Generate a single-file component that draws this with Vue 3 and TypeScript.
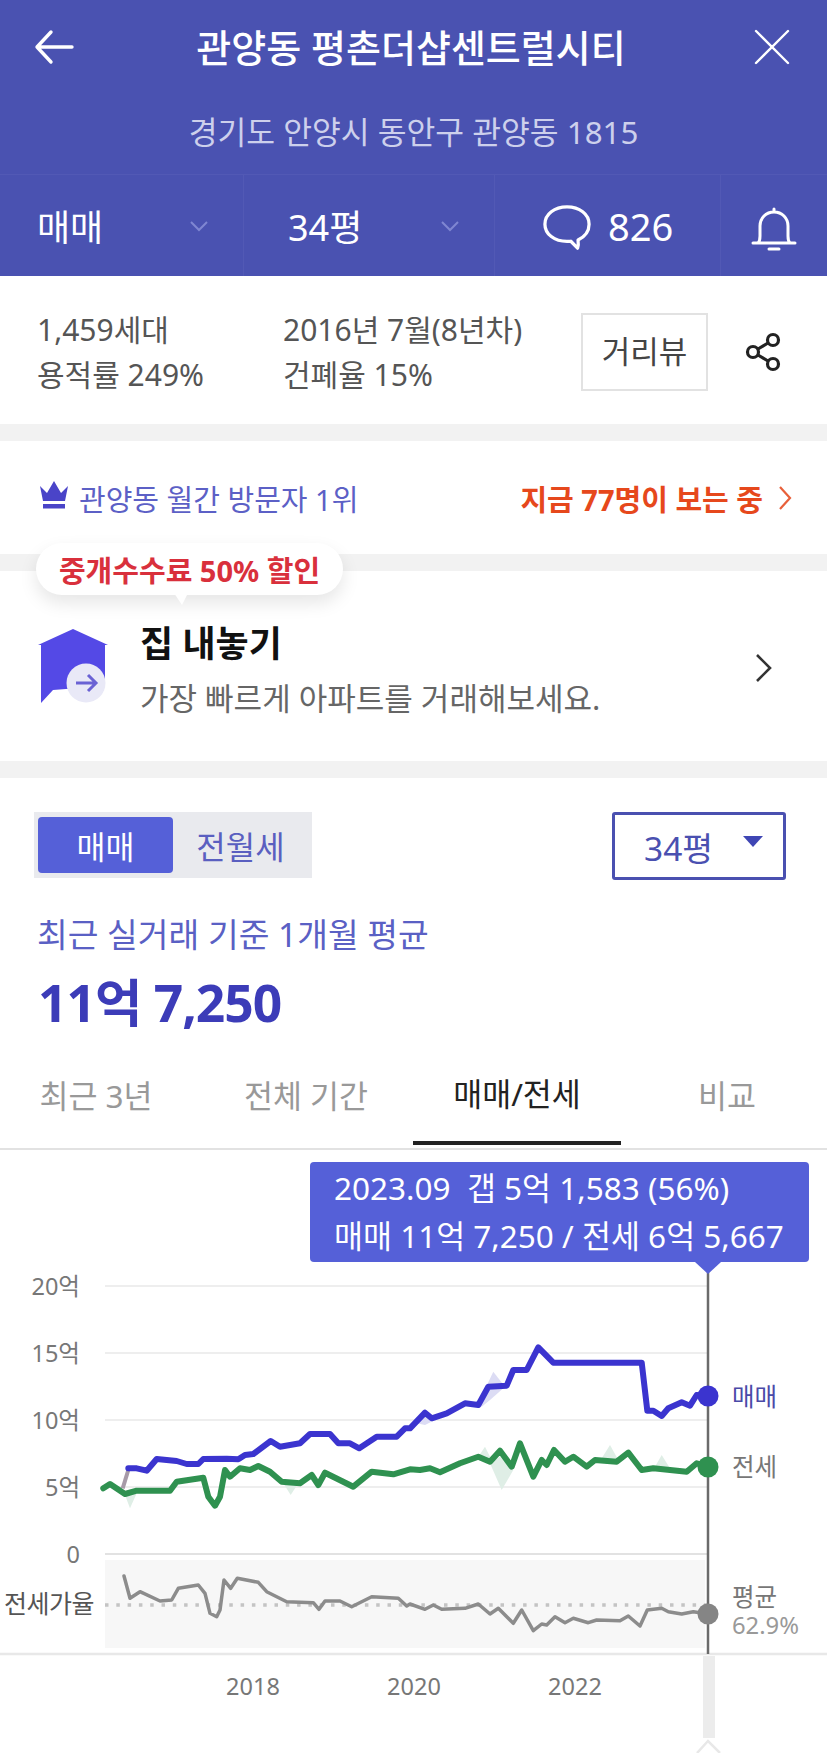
<script setup lang="ts">
type Pt = [number, number]
const left = (pts: Pt[], y0: number): Pt[] => pts.map(([x, y]) => [x / 3, y0 + y / 3])
const right = (pts: Pt[], y0: number): Pt[] => pts.map(([x, y]) => [410 + x / 3, y0 + y / 3])
const str = (pts: Pt[]) => pts.map(([x, y]) => `${x.toFixed(1)},${y.toFixed(1)}`).join(' ')

const blue = str([
  ...left([[385,685],[410,685],[440,692],[470,657],[530,663],[560,672],[595,672],[610,657],[680,656],[715,658],[735,645],[760,642],[812,603],[840,620],[900,610],[930,582],[990,582],[1015,610],[1050,610],[1078,625],[1130,590],[1190,590],[1215,565]], 1240),
  ...right([[0,565],[45,518],[65,535],[110,520],[165,490],[205,495],[235,440],[290,437],[310,390],[350,390],[385,322],[430,368],[695,368],[712,512],[730,512],[755,528],[775,505],[815,487],[840,497],[860,465],[895,468]], 1240)
])
const green = str([
  ...left([[310,745],[330,732],[375,762],[410,752],[510,752],[530,725],[610,713],[625,770],[645,797],[660,770],[675,690],[690,710],[720,685],[750,690],[775,678],[810,695],[845,725],[900,730],[935,705],[955,735],[975,698],[1060,740],[1115,695],[1180,703],[1230,688]], 1240),
  ...right([[0,688],[30,690],[60,685],[90,697],[150,670],[205,650],[240,665],[270,632],[305,680],[330,610],[370,710],[395,660],[410,675],[432,630],[465,665],[490,650],[530,680],[555,660],[620,665],[655,638],[695,690],[730,685],[830,695],[860,670],[895,680]], 1240)
])
const ratio = str([
  ...left([[372,228],[390,295],[420,275],[480,303],[515,300],[535,265],[595,255],[615,280],[630,340],[650,350],[660,330],[672,240],[692,265],[712,235],[775,247],[800,275],[860,305],[940,308],[957,328],[975,303],[1020,303],[1055,320],[1115,290],[1195,295],[1220,318]], 1500),
  ...right([[0,312],[45,328],[70,315],[95,328],[165,325],[205,312],[240,342],[265,325],[310,370],[335,330],[370,392],[395,372],[410,375],[435,350],[465,368],[490,355],[535,368],[560,360],[630,362],[655,348],[690,378],[712,330],[755,325],[775,335],[815,342],[850,335],[895,342]], 1500)
])
const start = str(left([[368,745],[385,690]], 1240))

const hazeBlue = [
  str(right([[205,490],[250,395],[285,440],[240,480],[215,500]], 1240)),
  str(right([[20,550],[50,520],[75,540],[45,555]], 1240))
]
const hazeGreen = [
  str(right([[240,670],[275,750],[310,690],[270,650]], 1240)),
  str(right([[205,650],[225,620],[245,660]], 1240)),
  str(right([[575,655],[600,615],[625,660]], 1240)),
  str(right([[735,680],[755,645],[780,685]], 1240)),
  str(left([[375,765],[390,805],[410,760]], 1240)),
  str(left([[850,730],[872,765],[895,730]], 1240))
]

const grid = [1286, 1353, 1420, 1487]
const yLabels = [
  { t: '20억', y: 1286 },
  { t: '15억', y: 1353 },
  { t: '10억', y: 1420 },
  { t: '5억', y: 1487 },
  { t: '0', y: 1554 }
]
const years = [
  { t: '2018', x: 253 },
  { t: '2020', x: 414 },
  { t: '2022', x: 575 }
]
const tabs = ['최근 3년', '전체 기간', '매매/전세', '비교']
</script>

<template>
  <div class="page">
    <header class="top">
      <div class="title-row">
        <svg class="back" viewBox="0 0 40 36" width="40" height="36">
          <path d="M38 18H3M17 3 3 18l14 15" fill="none" stroke="#fff" stroke-width="3.4" stroke-linecap="round" stroke-linejoin="round" />
        </svg>
        <h1 class="title">관양동 평촌더샵센트럴시티</h1>
        <svg class="close" viewBox="0 0 36 36" width="36" height="36">
          <path d="M2 2 34 34M34 2 2 34" fill="none" stroke="#fff" stroke-width="2.4" stroke-linecap="round" />
        </svg>
      </div>
      <div class="address">경기도 안양시 동안구 관양동 1815</div>
      <div class="bar">
        <div class="cell c1">
          <span>매매</span>
          <svg viewBox="0 0 20 12" width="20" height="12"><path d="M2 2l8 8 8-8" fill="none" stroke="#7f86d2" stroke-width="2" /></svg>
        </div>
        <div class="cell c2">
          <span>34평</span>
          <svg viewBox="0 0 20 12" width="20" height="12"><path d="M2 2l8 8 8-8" fill="none" stroke="#7f86d2" stroke-width="2" /></svg>
        </div>
        <div class="cell c3">
          <svg class="bubble" viewBox="0 0 52 50" width="50" height="48">
            <path d="M37 46C38 43 38 41 37.500 37.500C44.500 34 49 28 49 21C49 10.500 39 3 26 3S3 10.500 3 21S13 39 26 39C28 39 29 39 30 38.800Z" fill="none" stroke="#fff" stroke-width="3.400" stroke-linejoin="round" />
          </svg>
          <span class="count">826</span>
        </div>
        <div class="cell c4">
          <svg class="bell" viewBox="0 0 46 46" width="46" height="46">
            <path d="M2 37H44M7 37C9 35 9 33 9 30V20C9 12 15 6 23 6S37 12 37 20V30C37 33 37 35 39 37M23 3V6M18 43H28" fill="none" stroke="#fff" stroke-width="3" stroke-linecap="round" />
          </svg>
        </div>
      </div>
    </header>

    <section class="info">
      <div class="col first">
        <div>1,459세대</div>
        <div>용적률 249%</div>
      </div>
      <div class="col second">
        <div>2016년 7월(8년차)</div>
        <div>건폐율 15%</div>
      </div>
      <button class="street">거리뷰</button>
      <svg class="share" viewBox="0 0 38 40" width="38" height="40">
        <g fill="none" stroke="#222" stroke-width="3.200">
          <circle cx="28" cy="8" r="5.500" />
          <circle cx="8" cy="20" r="5.500" />
          <circle cx="28" cy="32" r="5.500" />
          <path d="M13 17 23 11M13 23 23 29" />
        </g>
      </svg>
    </section>

    <div class="gap"></div>

    <section class="rank">
      <div class="rank-left">
        <svg class="crown" viewBox="0 0 30 30" width="30" height="30">
          <path d="M1 6 8 13 15 1 22 13 29 6 26 21H4Z" fill="#4a44c8" />
          <rect x="4" y="24" width="22" height="4.500" fill="#4a44c8" />
        </svg>
        <span>관양동 월간 방문자 1위</span>
      </div>
      <div class="rank-right">
        <span>지금 77명이 보는 중</span>
        <svg viewBox="0 0 14 26" width="14" height="26"><path d="M2 2 12 13 2 24" fill="none" stroke="#e8603a" stroke-width="2.200" /></svg>
      </div>
    </section>

    <div class="gap"></div>

    <section class="sell">
      <div class="promo">중개수수료 50% 할인</div>
      <svg class="house" viewBox="0 0 72 78" width="72" height="78">
        <path d="M36 1 71 17H68V58L16 62 4 75V17H1Z" fill="#5449e6" />
        <circle cx="49" cy="55" r="19.500" fill="#e9e9f7" />
        <path d="M39 55H58M51 47l8 8-8 8" fill="none" stroke="#6a62d4" stroke-width="3" />
      </svg>
      <div class="sell-text">
        <div class="sell-title">집 내놓기</div>
        <div class="sell-sub">가장 빠르게 아파트를 거래해보세요.</div>
      </div>
      <svg class="more" viewBox="0 0 18 30" width="18" height="30"><path d="M2 2 15 15 2 28" fill="none" stroke="#333" stroke-width="2.600" /></svg>
    </section>

    <div class="gap"></div>

    <section class="price">
      <div class="controls">
        <div class="segment">
          <span class="seg on">매매</span>
          <span class="seg">전월세</span>
        </div>
        <div class="select">
          <span>34평</span>
          <i class="tri"></i>
        </div>
      </div>
      <div class="basis">최근 실거래 기준 1개월 평균</div>
      <div class="amount">11억 7,250</div>
      <nav class="tabs">
        <span v-for="(t, i) in tabs" :key="t" class="tab" :class="['t' + i, { active: i === 2 }]">{{ t }}</span>
      </nav>
    </section>

    <section class="chart">
      <svg class="plot" viewBox="0 1150 827 603" width="827" height="603">
        <line v-for="y in grid" :key="y" x1="105" x2="708" :y1="y" :y2="y" stroke="#e8e8e8" stroke-width="1.500" />
        <line x1="105" x2="708" y1="1554" y2="1554" stroke="#e2e2e2" stroke-width="2" />
        <rect x="105" y="1560" width="600" height="88" fill="#f7f7f7" />
        <line x1="0" x2="827" y1="1654" y2="1654" stroke="#e8e8e8" stroke-width="2.500" />
        <line x1="105" x2="708" y1="1605" y2="1605" stroke="#c4c4c4" stroke-width="3.500" stroke-dasharray="3.500 7.800" />

        <rect x="703" y="1656" width="12" height="82" fill="#ececec" />
        <path d="M697 1753 708 1741 720 1753" fill="none" stroke="#e8e8e8" stroke-width="2.500" />

        <polygon v-for="p in hazeBlue" :key="p" :points="p" fill="#dcdcf4" />
        <polygon v-for="p in hazeGreen" :key="p" :points="p" fill="#dfeee6" />

        <polyline :points="start" fill="none" stroke="#a79aa8" stroke-width="4" />
        <polyline :points="blue" fill="none" stroke="#3b34cf" stroke-width="6" stroke-linejoin="round" stroke-linecap="round" />
        <polyline :points="green" fill="none" stroke="#2f9150" stroke-width="6" stroke-linejoin="round" stroke-linecap="round" />
        <polyline :points="ratio" fill="none" stroke="#8c8c8c" stroke-width="3.500" stroke-linejoin="round" stroke-linecap="round" />

        <line x1="708" x2="708" y1="1270" y2="1654" stroke="#6b6b6b" stroke-width="2.500" />
        <circle cx="708" cy="1396" r="10.500" fill="#3b34cf" />
        <circle cx="708" cy="1467" r="10.500" fill="#2f9150" />
        <circle cx="708" cy="1614" r="10.500" fill="#858585" />

        <text v-for="l in yLabels" :key="l.t" class="axis" x="80" :y="l.y" text-anchor="end" dominant-baseline="central">{{ l.t }}</text>
        <text class="ratio-label" x="4" y="1603" dominant-baseline="central">전세가율</text>
        <text v-for="y in years" :key="y.t" class="year" :x="y.x" y="1686" text-anchor="middle" dominant-baseline="central">{{ y.t }}</text>
        <text class="legend buy" x="732" y="1396" dominant-baseline="central">매매</text>
        <text class="legend rent" x="732" y="1466" dominant-baseline="central">전세</text>
        <text class="legend rent" x="732" y="1596" dominant-baseline="central">평균</text>
        <text class="avg" x="732" y="1625" dominant-baseline="central">62.9%</text>
      </svg>
      <div class="tip">
        <div>2023.09&nbsp; 갭 5억 1,583 (56%)</div>
        <div>매매 11억 7,250 / 전세 6억 5,667</div>
      </div>
    </section>
  </div>
</template>

<style scoped>
.page {
  width: 827px;
  height: 1753px;
  overflow: hidden;
  background: #fff;
  font-family: "Noto Sans", "Noto Sans CJK KR", sans-serif;
  color: #555;
}
.top {
  background: #4a52b1;
  color: #fff;
}
.title-row {
  height: 94px;
  padding: 0 37px 0 34px;
  display: flex;
  align-items: center;
  justify-content: space-between;
  position: relative;
}
.title {
  margin: 0 6px 0 0;
  font-size: 38px;
  font-weight: 500;
  line-height: 48px;
}
.address {
  height: 80px;
  display: flex;
  align-items: center;
  justify-content: center;
  font-size: 31.3px;
  color: #cdd0ec;
  padding-bottom: 8px;
  box-sizing: border-box;
}
.bar {
  height: 102px;
  display: flex;
  border-top: 1px solid #5259b5;
  box-sizing: border-box;
}
.cell {
  display: flex;
  align-items: center;
  box-sizing: border-box;
  border-right: 1px solid #5259b5;
  font-size: 36px;
}
.c1 {
  width: 244px;
  padding: 0 34px 0 37px;
  justify-content: space-between;
}
.c2 {
  width: 251px;
  padding: 0 34px 0 44px;
  justify-content: space-between;
}
.c3 {
  width: 226px;
  padding-left: 47px;
  gap: 16px;
}
.bubble {
  margin-top: 4px;
}
.count {
  font-size: 38px;
}
.c4 {
  flex: 1;
  justify-content: center;
  border-right: 0;
}
.bell {
  margin-top: 6px;
}
.info {
  height: 148px;
  display: flex;
  align-items: center;
  padding: 3px 0 0 37px;
  box-sizing: border-box;
  font-size: 30px;
  line-height: 45px;
  color: #555;
}
.first {
  width: 246px;
}
.second {
  width: 298px;
}
.street {
  width: 127px;
  height: 78px;
  padding: 0;
  border: 2px solid #e2e2e2;
  background: #fff;
  font: inherit;
  font-size: 31px;
  color: #444;
}
.share {
  margin-left: 37px;
}
.gap {
  height: 17px;
  background: #f2f2f2;
}
.rank {
  height: 113px;
  display: flex;
  align-items: center;
  justify-content: space-between;
  padding: 0 35px 0 39px;
  font-size: 29px;
}
.rank-left {
  display: flex;
  align-items: center;
  gap: 10px;
  color: #5c60c6;
}
.crown {
  margin-top: -5px;
}
.rank-right {
  display: flex;
  align-items: center;
  gap: 15px;
  color: #e6481c;
  font-weight: 700;
}
.sell {
  height: 190px;
  position: relative;
  display: flex;
  align-items: center;
  padding: 0 54px 0 37px;
}
.promo {
  position: absolute;
  left: 36px;
  top: -28px;
  height: 52px;
  width: 307px;
  display: flex;
  align-items: center;
  justify-content: center;
  background: #fff;
  border-radius: 26px;
  box-shadow: 0 8px 18px rgba(0, 0, 0, 0.1);
  color: #d9303c;
  font-size: 29px;
  font-weight: 700;
}
.promo::after {
  content: "";
  position: absolute;
  left: 138px;
  top: 50px;
  width: 0;
  height: 0;
  border-left: 8px solid transparent;
  border-right: 6px solid transparent;
  border-top: 12px solid #fff;
}
.house {
  flex: none;
  margin-top: 2px;
}
.sell-text {
  flex: 1;
  margin-left: 31px;
  margin-top: 8px;
}
.sell-title {
  font-size: 36px;
  font-weight: 700;
  color: #111;
  line-height: 48px;
}
.sell-sub {
  font-size: 31px;
  color: #666;
  line-height: 44px;
  margin-top: 8px;
}
.more {
  flex: none;
  margin-top: 4px;
}
.price {
  height: 372px;
  padding-top: 34px;
  box-sizing: border-box;
  border-bottom: 2px solid #e2e2e2;
}
.controls {
  display: flex;
  justify-content: space-between;
  padding: 0 41px 0 34px;
}
.segment {
  width: 278px;
  height: 66px;
  background: #e9eaee;
  box-sizing: border-box;
  padding: 5px 4px;
  display: flex;
  font-size: 32px;
  color: #5a5fc0;
}
.seg {
  display: flex;
  align-items: center;
  justify-content: center;
  width: 135px;
}
.seg.on {
  background: #5560d8;
  color: #fff;
  border-radius: 4px;
  font-size: 31.5px;
}
.select {
  width: 174px;
  height: 68px;
  box-sizing: border-box;
  border: 3px solid #4a50b0;
  border-radius: 3px;
  display: flex;
  align-items: center;
  padding-left: 29px;
  font-size: 33.5px;
  color: #4a50b0;
  position: relative;
}
.tri {
  position: absolute;
  right: 20px;
  top: 21px;
  width: 0;
  height: 0;
  border-left: 10px solid transparent;
  border-right: 10px solid transparent;
  border-top: 11px solid #3f46b4;
}
.basis {
  margin: 32px 0 0 37px;
  font-size: 33.4px;
  line-height: 44px;
  color: #5a60c4;
}
.amount {
  margin: 12px 0 0 38px;
  font-size: 51.5px;
  line-height: 68px;
  font-weight: 700;
  color: #3c3cb8;
  letter-spacing: -1px;
}
.tabs {
  display: flex;
  margin-top: 21px;
  font-size: 31.5px;
  color: #999;
}
.tab {
  height: 88px;
  display: flex;
  align-items: center;
  justify-content: center;
  box-sizing: border-box;
  padding-bottom: 15px;
}
.t0 {
  width: 192px;
}
.t1 {
  width: 221px;
  padding-left: 7px;
}
.t2 {
  width: 208px;
}
.t3 {
  flex: 1;
  padding-left: 6px;
}
.tab.active {
  color: #222;
  border-bottom: 4px solid #222;
}
.chart {
  position: relative;
  height: 603px;
}
.plot {
  display: block;
}
.tip {
  position: absolute;
  left: 310px;
  top: 12px;
  width: 499px;
  height: 100px;
  box-sizing: border-box;
  padding: 2px 0 0 24px;
  background: #5560d8;
  border-radius: 4px;
  color: #fff;
  font-size: 31.5px;
  line-height: 48px;
  white-space: nowrap;
}
.tip::after {
  content: "";
  position: absolute;
  left: 385px;
  top: 100px;
  width: 0;
  height: 0;
  border-left: 13px solid transparent;
  border-right: 13px solid transparent;
  border-top: 12px solid #5560d8;
}
.axis,
.year {
  font-size: 23.5px;
  fill: #777;
}
.ratio-label {
  font-size: 25px;
  fill: #555;
  letter-spacing: -0.5px;
}
.legend {
  font-size: 24.5px;
}
.buy {
  fill: #4a4aa8;
}
.rent {
  fill: #777;
}
.avg {
  font-size: 23.8px;
  fill: #999;
}
</style>
